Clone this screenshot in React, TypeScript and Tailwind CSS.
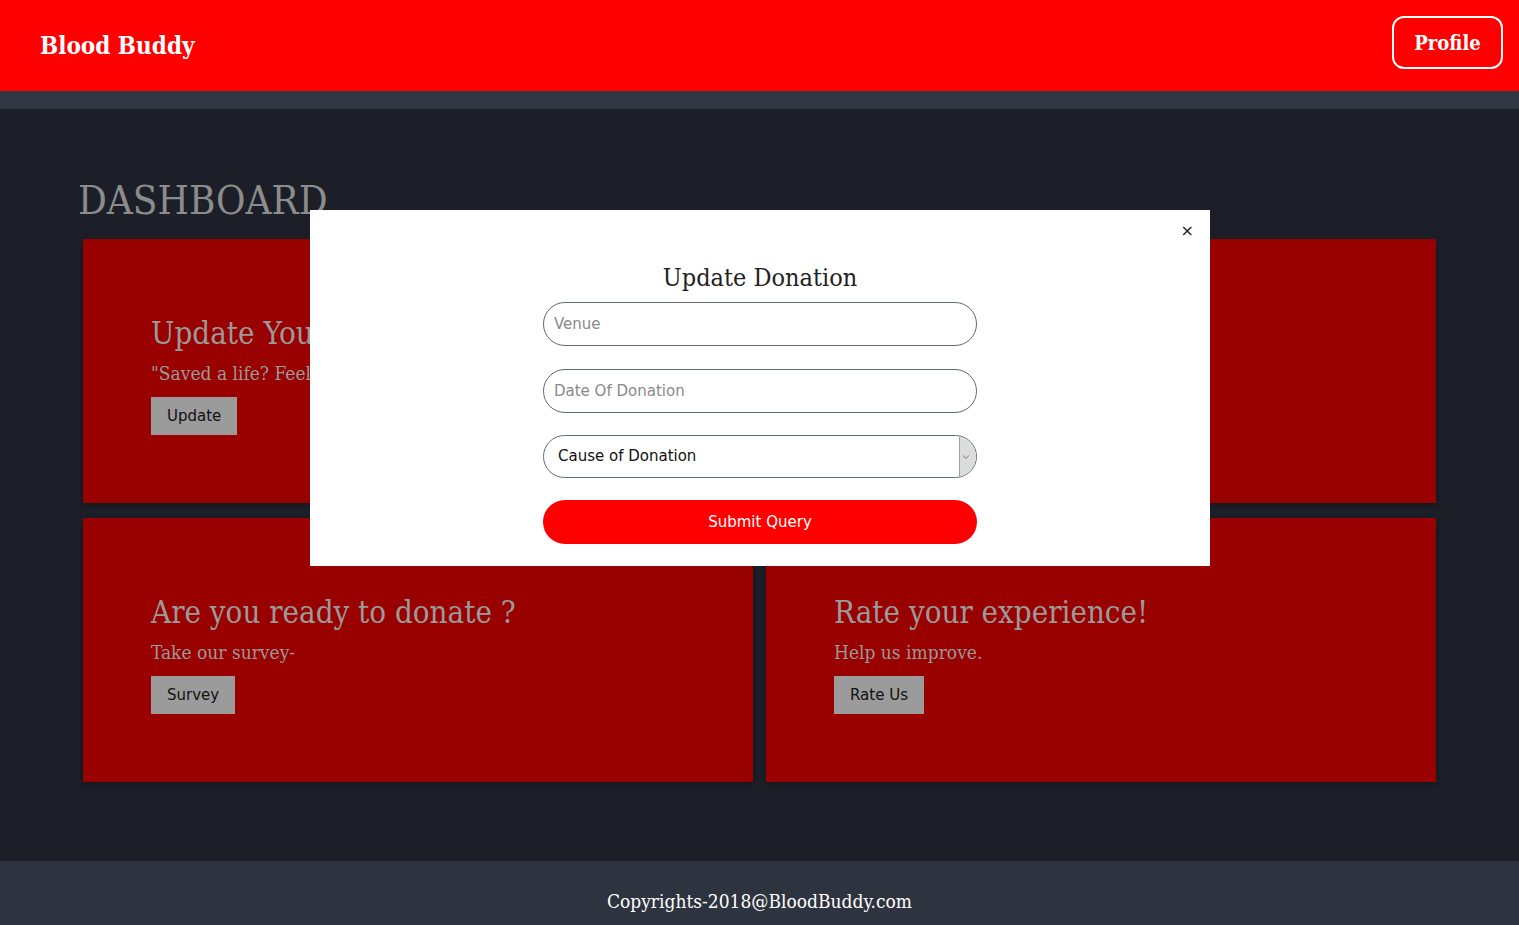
import React from "react";

const serif = "font-['DejaVu_Serif_Condensed','DejaVu_Serif',serif]";
const sans = "font-['DejaVu_Sans',sans-serif]";

function Card({ title, text, button }: { title: string; text: string; button: string }) {
  return (
    <div className="h-[264px] bg-[#990000] pl-[68px] pt-[74px] shadow-[0_2px_6px_rgba(0,0,0,0.35)] overflow-hidden">
      <h2 className={`${serif} text-[31px] leading-[40px] text-[#9a9a9a] whitespace-nowrap`}>{title}</h2>
      <p className={`${serif} text-[19px] leading-[24px] text-[#9a9a9a] mt-[8px] whitespace-nowrap`}>{text}</p>
      <button className={`${sans} mt-[12px] h-[38px] px-4 bg-[#9b9b9b] text-[15px] text-[#111]`}>{button}</button>
    </div>
  );
}

export default function App() {
  return (
    <div className="min-h-[925px] flex flex-col bg-[#1c1f28]">
      <header className="h-[91px] bg-[#ff0000] flex items-center justify-between pl-10 pr-4">
        <div className={`${serif} font-bold text-[24px] text-white mt-[1px]`}>Blood Buddy</div>
        <button className={`${serif} font-bold text-[20px] text-white border-2 border-white rounded-[12px] w-[111px] h-[53px] mt-[-6px]`}>
          Profile
        </button>
      </header>
      <div className="h-[18px] bg-[#323744]" />
      <main className="flex-1 relative px-[83px] pt-[68px]">
        <h1 className={`${serif} text-[40px] leading-[46px] text-[#8c8c8c] -ml-[5px] h-[62px]`}>DASHBOARD</h1>
        <div className="grid grid-cols-2 gap-x-[13px] gap-y-[15px]">
          <Card title="Update Your Donation" text={'"Saved a life? Feel proud, update it."'} button="Update" />
          <Card title="Find a Donor" text="Search donors near you." button="Search" />
          <Card title="Are you ready to donate ?" text="Take our survey-" button="Survey" />
          <Card title="Rate your experience!" text="Help us improve." button="Rate Us" />
        </div>

        <div className="absolute left-[310px] top-[101px] w-[900px] h-[356px] bg-white">
          <button className={`${sans} absolute right-[16px] top-[13px] text-[16px] leading-[16px] text-[#222]`}>×</button>
          <div className="w-[434px] mx-auto pt-[52px] flex flex-col">
            <h3 className={`${serif} text-center text-[25px] leading-[32px] text-[#222]`}>Update Donation</h3>
            <input
              placeholder="Venue"
              className={`${sans} mt-[8px] h-[44px] rounded-full border border-[#5f6a7a] px-[10px] text-[15px] placeholder:text-[#8a8a8a] outline-none`}
            />
            <input
              placeholder="Date Of Donation"
              className={`${sans} mt-[23px] h-[44px] rounded-full border border-[#5f6a7a] px-[10px] text-[15px] placeholder:text-[#8a8a8a] outline-none`}
            />
            <div className="relative mt-[22px] h-[43px] rounded-full border border-[#5f6a7a] overflow-hidden flex">
              <div className={`${sans} flex-1 flex items-center pl-[14px] text-[15px] text-[#111]`}>Cause of Donation</div>
              <div className="w-[17px] bg-[#dcdcdc] border-l border-[#9aa0a8] flex items-center justify-start pl-[2px]">
                <svg width="8" height="6" viewBox="0 0 8 6"><path d="M1 1.5 L4 4.5 L7 1.5" stroke="#777" strokeWidth="1" fill="none" /></svg>
              </div>
            </div>
            <button className={`${sans} mt-[22px] h-[44px] rounded-full bg-[#ff0000] text-white text-[15px]`}>Submit Query</button>
          </div>
        </div>
      </main>
      <footer className="h-[64px] bg-[#2e3340] flex items-center justify-center">
        <span className={`${serif} text-[19px] text-white mt-[16px]`}>Copyrights-2018@BloodBuddy.com</span>
      </footer>
    </div>
  );
}
